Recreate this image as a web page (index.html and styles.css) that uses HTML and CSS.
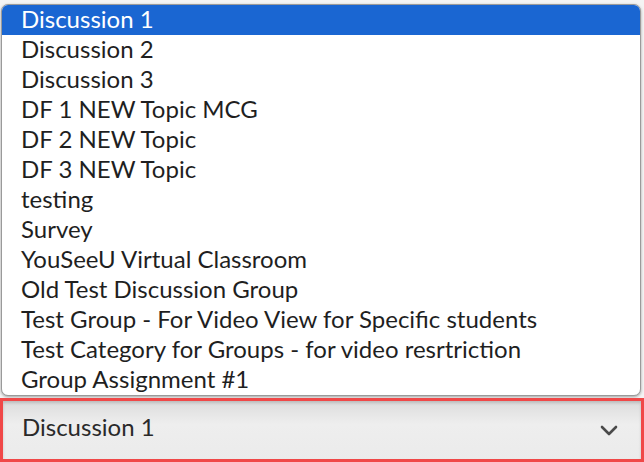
FILE: index.html
```html
<!DOCTYPE html>
<html lang="en">
<head>
  <meta charset="UTF-8" />
  <title>Discussion select</title>
  <link rel="stylesheet" href="styles.css">
</head>
<body>
  <div class="page">
    <ul class="dropdown">
      <li class="option selected">Discussion 1</li>
      <li class="option">Discussion 2</li>
      <li class="option">Discussion 3</li>
      <li class="option">DF 1 NEW Topic MCG</li>
      <li class="option">DF 2 NEW Topic</li>
      <li class="option">DF 3 NEW Topic</li>
      <li class="option">testing</li>
      <li class="option">Survey</li>
      <li class="option">YouSeeU Virtual Classroom</li>
      <li class="option">Old Test Discussion Group</li>
      <li class="option">Test Group - For Video View for Specific students</li>
      <li class="option">Test Category for Groups - for video resrtriction</li>
      <li class="option">Group Assignment #1</li>
    </ul>
    <div class="select">
      <span class="value">Discussion 1</span>
      <svg class="chevron" width="18" height="11" viewBox="0 0 18 11">
        <path d="M2 2 L9 9 L16 2" fill="none" stroke="#4a4a4a" stroke-width="2.6" stroke-linecap="round" stroke-linejoin="round"/>
      </svg>
    </div>
  </div>
</body>
</html>
```

FILE: styles.css
```css
body {
  margin: 0;
  background: #f4f4f4;
  font-family: Lato, "Open Sans", sans-serif;
  color: #1f1f1f;
}
.page {
  width: 644px;
  height: 462px;
  overflow: hidden;
  padding-top: 4px;
  box-sizing: border-box;
}
.dropdown {
  list-style: none;
  margin: 0 3px 0 1px;
  padding: 0;
  background: #fff;
  border: 1px solid #9a9a9a;
  border-radius: 7px;
  box-shadow: 0 1px 3px rgba(0,0,0,0.35);
  overflow: hidden;
}
.option {
  height: 30px;
  line-height: 27px;
  padding-left: 19px;
  font-size: 24px;
  white-space: nowrap;
}
.selected {
  background: #1a66d2;
  color: #fff;
}
.select {
  height: 58px;
  border: 3px solid #f04848;
  background: linear-gradient(#dcdcdc, #eeeeee 40%, #ebebeb);
  box-shadow: inset 0 2px 3px rgba(0,0,0,0.15);
  display: flex;
  align-items: center;
  justify-content: space-between;
  padding: 0 23px 0 19px;
  margin-top: 2px;
}
.value {
  font-size: 24px;
  color: #2a2a2a;
  margin-top: -8px;
}
.chevron {
  display: block;
  margin-left: 1px;
}
```
